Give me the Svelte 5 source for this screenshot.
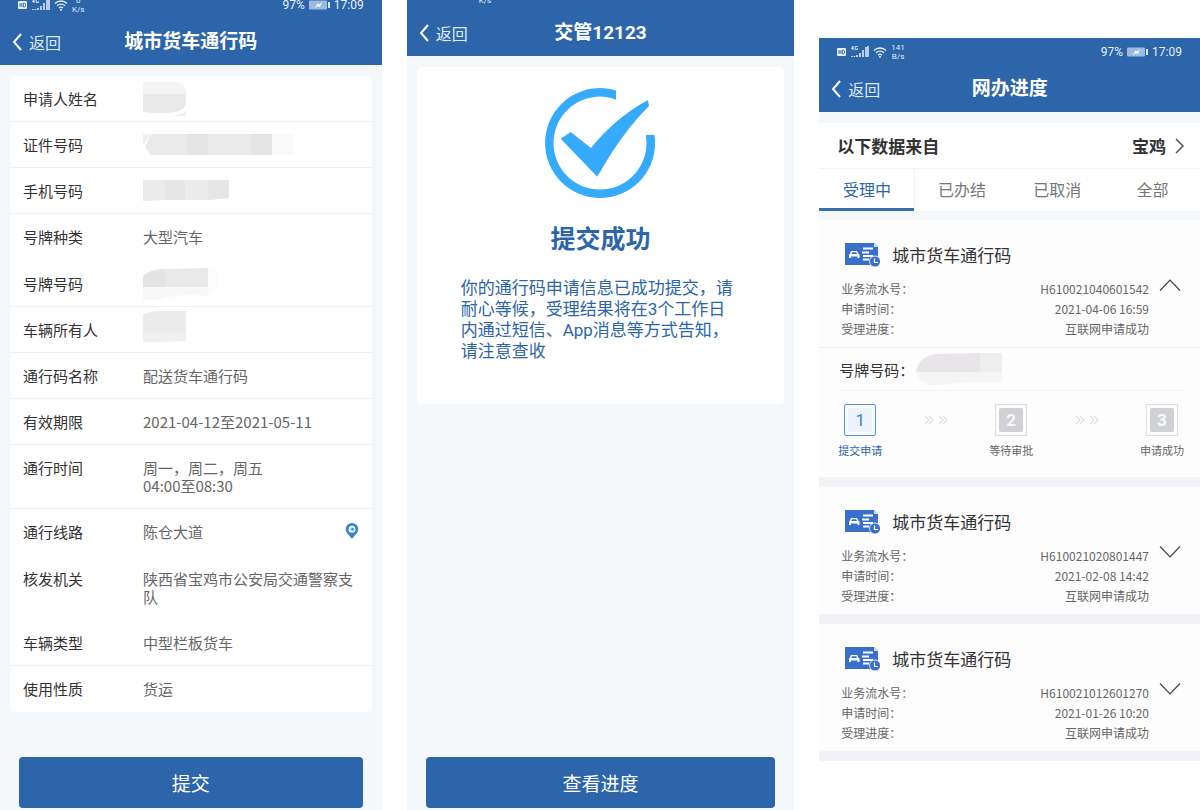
<script>
  // line = row has a visible rule under it, mask = value is blanked out
  const fields = [
    { label: '申请人姓名', mask: 'name', line: true },
    { label: '证件号码', mask: 'id', line: true },
    { label: '手机号码', mask: 'mobile', line: true },
    { label: '号牌种类', value: '大型汽车' },
    { label: '号牌号码', mask: 'plate', line: true },
    { label: '车辆所有人', mask: 'owner', line: true },
    { label: '通行码名称', value: '配送货车通行码', line: true },
    { label: '有效期限', value: '2021-04-12至2021-05-11', line: true },
    { label: '通行时间', value: '周一，周二，周五\n04:00至08:30', line: true },
    { label: '通行线路', value: '陈仓大道', pin: true },
    { label: '核发机关', value: '陕西省宝鸡市公安局交通警察支队' },
    { label: '车辆类型', value: '中型栏板货车', line: true },
    { label: '使用性质', value: '货运' }
  ]

  const tabs = ['受理中', '已办结', '已取消', '全部']
  let activeTab = $state(0)

  const steps = ['提交申请', '等待审批', '申请成功']

  let items = $state([
    { no: 'H610021040601542', time: '2021-04-06 16:59', open: true },
    { no: 'H610021020801447', time: '2021-02-08 14:42', open: false },
    { no: 'H610021012601270', time: '2021-01-26 10:20', open: false }
  ])
</script>

{#snippet topbar(title, speed, unit, cut)}
  <header class="topbar {cut}">
    <div class="status">
      <svg width="10" height="10" viewBox="0 0 10 10">
        <rect x="0" y="1" width="9" height="8" rx="1" fill="#e6eef8" />
        <path d="M2 3v4M4 3v4M2 5h2M5.500 3v4h1l1-1v-2l-1-1z" fill="none" stroke="#2c65a9" stroke-width=".8" />
      </svg>
      <svg width="18" height="14" viewBox="0 0 18 14">
        <path d="M2 1L.6 3.600h2M2 1v4M6.600 1.500H4.200v3h2.200V3.200" fill="none" stroke="#e6eef8" stroke-width=".9" />
        <path d="M1 12v-1M3.500 12v-1M6 12v-2M9 12V8M12 12V5M15 12V2M17 12V1" fill="none" stroke="#e6eef8" stroke-width="1.500" />
      </svg>
      <svg width="14" height="12" viewBox="0 0 14 12">
        <path d="M1 4.500a8.500 8.500 0 0 1 12 0M3 6.800a5.600 5.600 0 0 1 8 0M5 9a2.800 2.800 0 0 1 4 0" fill="none" stroke="#e6eef8" stroke-width="1.300" />
        <circle cx="7" cy="10.700" r="1" fill="#e6eef8" />
      </svg>
      <span class="speed">{speed}<br />{unit}</span>
      {#if cut !== 'cut-large'}
        <span class="percent">97%</span>
        <svg width="21" height="10" viewBox="0 0 21 10">
          <rect x="0" y="0.500" width="18" height="9" rx="1" fill="#9dbbe0" />
          <rect x="19" y="2" width="2" height="6" fill="#dbe7f5" />
          <path d="M6 8l3-5 1 2 3-3-2 5-2-1z" fill="#fff" />
        </svg>
        <span>17:09</span>
      {/if}
    </div>
    <div class="nav">
      <button class="back">
        <svg width="10" height="18" viewBox="0 0 10 18">
          <path d="M9 1L2 9l7 8" fill="none" stroke="#fff" stroke-width="2" />
        </svg>
        返回
      </button>
      <h1>{title}</h1>
    </div>
  </header>
{/snippet}

{#snippet mask(kind)}
  {#if kind === 'name'}
    <svg width="44" height="34" viewBox="0 0 44 34">
      <path d="M0 0h34q9 2 9 12H0z" fill="#f4f4f4" />
      <path d="M0 12h43v10q-3 8-15 8.500Q12 32 0 30z" fill="#e9e9e9" />
      <path d="M30 34q8-1 13-5v5z" fill="#f0f0f0" />
    </svg>
  {:else if kind === 'id'}
    <svg width="152" height="22" viewBox="0 0 152 22">
      <path d="M0 0h8L0 12z" fill="#f0f0f0" />
      <path d="M8 0h121v21H8L2 13z" fill="#eaeaea" />
      <path d="M44 0h21v21H44zM108 0h21v21h-21z" fill="#e4e4e4" />
      <path d="M129 0h22v21h-22z" fill="#f9f9f9" />
    </svg>
  {:else if kind === 'mobile'}
    <svg width="86" height="22" viewBox="0 0 86 22">
      <path d="M0 0h86v18l-20 2H22L0 21z" fill="#ebebeb" />
      <path d="M22 0h20v20H22zM65 0h21v18l-21 2z" fill="#e6e6e6" />
    </svg>
  {:else if kind === 'plate'}
    <svg width="76" height="32" viewBox="0 0 76 32">
      <path d="M65 0q12 4 10 14-2 10-10 14z" fill="#fcfcfc" />
      <path d="M0 19h65v10q-26-5-50 3H0z" fill="#f8f8f8" />
      <path d="M0 8Q8 1 22 1L65 0v19H0z" fill="#e9e9e9" />
      <path d="M0 8Q8 1 22 1v18H0z" fill="#e3e3e3" />
    </svg>
  {:else}
    <svg width="44" height="38" viewBox="0 0 44 38">
      <path d="M0 3L12 0h31v30L0 31z" fill="#ececec" />
      <path d="M0 21h43v9L0 31z" fill="#f0f0f0" />
    </svg>
  {/if}
{/snippet}

<main class="board">
  <section class="phone">
    {@render topbar('城市货车通行码', '0', 'K/s', 'cut-small')}
    <dl class="card fields">
      {#each fields as f}
        <div class="field" class:line={f.line}>
          <dt>{f.label}</dt>
          {#if f.mask}
            <dd class="masked">{@render mask(f.mask)}</dd>
          {:else}
            <dd>{f.value}</dd>
          {/if}
          {#if f.pin}
            <svg class="pin" width="14" height="16" viewBox="0 0 14 16">
              <path d="M7 0a6.300 6.300 0 0 1 6.300 6.300C13.300 10 9 13 7 16 5 13 .7 10 .7 6.300A6.300 6.300 0 0 1 7 0z" fill="#3b82cf" />
              <circle cx="7" cy="6.300" r="3.500" fill="#e9f6ff" />
              <path d="M5 6.300L8.500 4.500v3.600z" fill="#3b82cf" />
            </svg>
          {/if}
        </div>
      {/each}
    </dl>
    <button class="primary">提交</button>
  </section>

  <section class="phone">
    {@render topbar('交管12123', '0', 'K/s', 'cut-large')}
    <div class="card result">
      <svg width="110" height="110" viewBox="0 0 110 110" fill="#36abfd">
        <path d="M71 2.400A55 55 0 1 0 109.500 47H100.800A46.500 46.500 0 1 1 71 11.400z" />
        <path d="M15.700 50.700L25.700 44 46 60C58 45 78 25 103 12l1 6C85 37 70 58 52.300 88.700z" />
      </svg>
      <h2>提交成功</h2>
      <p>你的通行码申请信息已成功提交，请耐心等候，受理结果将在3个工作日内通过短信、App消息等方式告知，请注意查收</p>
    </div>
    <button class="primary">查看进度</button>
  </section>

  <section class="phone progress">
    {@render topbar('网办进度', '141', 'B/s', '')}
    <div class="source">
      <span>以下数据来自</span>
      <button>
        宝鸡
        <svg width="10" height="16" viewBox="0 0 10 16">
          <path d="M1 1l7 7-7 7" fill="none" stroke="#555" stroke-width="1.500" />
        </svg>
      </button>
    </div>
    <div class="tabs" role="tablist">
      {#each tabs as tab, i}
        <button role="tab" aria-selected={activeTab === i} class:active={activeTab === i} onclick={() => (activeTab = i)}>{tab}</button>
      {/each}
    </div>
    {#each items as item}
      <article>
        <div class="title">
          <svg width="35" height="25" viewBox="0 0 35 25">
            <path d="M0 0h29l4 4v18H0z" fill="#3a70cd" />
            <path d="M29 0v4h4z" fill="#cfdff6" />
            <path d="M6 8h6l1.500 3 1 .5V15h-2v-1.500H6V15H4v-3.500l.8-.5z" fill="#fff" />
            <path d="M7 9.200h4.300l.7 1.800H6.300z" fill="#3a70cd" />
            <path d="M18 5.500h10M17 9.500h7M18 13h10M18 16.500h6" stroke="#fff" stroke-width="2" />
            <circle cx="30" cy="18.500" r="5.500" fill="#3a70cd" stroke="#fff" stroke-width=".8" />
            <path d="M29.500 15.500v4h3.500" fill="none" stroke="#fff" stroke-width="1.200" />
          </svg>
          <h3>城市货车通行码</h3>
        </div>
        <div class="summary">
          <dl>
            <div><dt>业务流水号：</dt><dd>{item.no}</dd></div>
            <div><dt>申请时间：</dt><dd>{item.time}</dd></div>
            <div><dt>受理进度：</dt><dd>互联网申请成功</dd></div>
          </dl>
          <button class="toggle" aria-label="展开" aria-expanded={item.open} onclick={() => (item.open = !item.open)}>
            <svg width="22" height="12" viewBox="0 0 22 12">
              <path d={item.open ? 'M1 11.500L11 1l10 10.500' : 'M1 .5L11 11 21 .5'} fill="none" stroke="#444" stroke-width="1.200" />
            </svg>
          </button>
        </div>
        {#if item.open}
          <div class="plate">
            <span>号牌号码：</span>
            <svg width="86" height="33" viewBox="0 0 86 33">
              <path d="M0 19h86v10q-50 0-68 4Q3 31 0 19z" fill="#f6f5f6" />
              <path d="M0 19Q3 3 20 1l44-1v19z" fill="#e7e5e7" />
              <path d="M64 0h22v19H64z" fill="#efeeef" />
            </svg>
          </div>
          <ol class="steps">
            {#each steps as step, i}
              {#if i > 0}
                <li class="arrows" aria-hidden="true">
                  <svg width="24" height="10" viewBox="0 0 24 10">
                    <path d="M1 1l4 4-4 4M5 1l4 4-4 4M15 1l4 4-4 4M19 1l4 4-4 4" fill="none" stroke="#dcdfe6" stroke-width="1.200" />
                  </svg>
                </li>
              {/if}
              <li class="step" class:current={i === 0}>
                <span class="box"><b>{i + 1}</b></span>
                <span>{step}</span>
              </li>
            {/each}
          </ol>
        {/if}
      </article>
    {/each}
  </section>
</main>

<style>
  :global(body) {
    margin: 0;
    background: #fff;
  }
  .board {
    display: grid;
    grid-template-columns: 382fr 388fr 381fr;
    column-gap: 25px;
    min-height: 100vh;
    overflow: hidden;
    font-family: "Noto Sans CJK SC", "Noto Sans", sans-serif;
    color: #333;
  }
  button {
    font: inherit;
    color: inherit;
    border: 0;
    padding: 0;
    background: none;
    cursor: pointer;
  }
  svg {
    display: block;
    flex: none;
  }
  h1, h2, h3, p, dl, dd, ol {
    margin: 0;
    padding: 0;
  }
  .phone {
    display: flex;
    flex-direction: column;
    min-width: 0;
    background: #f4f8fa;
  }

  /* header */
  .topbar {
    background: #2c65a9;
    color: #fff;
  }
  .cut-small {
    margin-top: -9px;
  }
  .cut-large {
    margin-top: -18px;
  }
  .cut-large .status svg {
    visibility: hidden;
  }
  .status {
    display: flex;
    align-items: center;
    gap: 4px;
    height: 28px;
    padding: 0 18px;
    font: 12px/10px Roboto, sans-serif;
    color: #e6eef8;
  }
  .speed {
    font-size: 8px;
    line-height: 9px;
    text-align: center;
  }
  .percent {
    margin-left: auto;
  }
  .nav {
    display: grid;
    grid-template-columns: 1fr auto 1fr;
    align-items: center;
    height: 46px;
    padding: 0 12px;
  }
  .back {
    display: flex;
    align-items: center;
    gap: 7px;
    font-size: 16px;
    line-height: 20px;
    color: #dfeaf7;
  }
  h1 {
    font: bold 19px/24px Roboto, "Noto Sans CJK SC", sans-serif;
  }

  .card {
    margin: 11px 10px 0;
    background: #fff;
    border-radius: 5px;
  }
  .primary {
    margin: auto 19px 2px;
    height: 51px;
    flex: none;
    border-radius: 4px;
    background: #2c65a9;
    color: #fff;
    font-size: 19px;
  }

  /* application details */
  .fields {
    flex: 1;
    display: flex;
    flex-direction: column;
    margin-bottom: 45px;
    font-size: 15px;
    line-height: 18px;
  }
  .field {
    flex: 1 0 auto;
    display: flex;
    padding: 14px 13px;
  }
  .field.line {
    box-shadow: inset 0 -1px #eff2f2;
  }
  .field dt {
    flex: 0 0 120px;
  }
  .field dd {
    flex: 1;
    white-space: pre-line;
    color: #666;
  }
  .field .masked {
    display: flex;
    align-items: center;
    height: 18px;
  }
  .pin {
    margin-left: -14px;
  }

  /* submit result */
  .result {
    display: flex;
    flex-direction: column;
    align-items: center;
    padding: 21px 44px 42px;
    color: #2c65a9;
  }
  .result h2 {
    margin: 22px 0 24px;
    font-size: 25px;
    line-height: 34px;
  }
  .result p {
    font: 17px/21px Roboto, "Noto Sans CJK SC", sans-serif;
  }

  /* progress */
  .progress {
    align-self: start;
    margin-top: 38px;
    background: #f4f1f6;
  }
  .source {
    display: flex;
    justify-content: space-between;
    align-items: center;
    height: 45px;
    padding: 0 15px 0 18px;
    border-top: 11px solid #f4f8fa;
    background: #fff;
    font-size: 17px;
    line-height: 24px;
    font-weight: bold;
  }
  .source button {
    display: flex;
    align-items: center;
    gap: 9px;
  }
  .tabs {
    display: grid;
    grid-template-columns: repeat(4, 1fr);
    height: 42px;
    background: #fff;
    border-top: 1px solid #f2f3f5;
    border-bottom: 9px solid #f4f8fa;
  }
  .tabs button {
    border-bottom: 3px solid transparent;
    font-size: 16px;
    color: #777;
  }
  .tabs button.active {
    border-color: #3a6fb0;
    color: #2c65a9;
    box-shadow: 1px 0 #f0f1f4;
  }
  article {
    margin-bottom: 10px;
    background: #fdfdfe;
  }
  .title {
    display: flex;
    align-items: center;
    gap: 12px;
    height: 26px;
    padding: 22px 26px 11px;
  }
  h3 {
    font-size: 17px;
    line-height: 24px;
    font-weight: normal;
  }
  .summary {
    display: flex;
    align-items: flex-start;
    gap: 10px;
    padding: 0 19px 8px 22px;
  }
  .summary dl {
    flex: 1;
    font-size: 12px;
    line-height: 20px;
    color: #666;
  }
  .summary dl div {
    display: flex;
    justify-content: space-between;
  }
  .plate {
    display: flex;
    align-items: center;
    gap: 2px;
    height: 42px;
    padding: 0 20px;
    border-top: 1px solid #f0f0f3;
    font-size: 15px;
  }
  .steps {
    display: flex;
    justify-content: space-between;
    margin: 0 16px 0 19px;
    padding: 13px 0 19px;
    border-top: 1px solid #f3f3f6;
    list-style: none;
  }
  .step {
    display: flex;
    flex-direction: column;
    align-items: center;
    gap: 6px;
    font-size: 11px;
    line-height: 16px;
    color: #666;
  }
  .arrows {
    padding-top: 11px;
  }
  .box {
    display: flex;
    padding: 3px;
    border: 1px solid #dcdde0;
  }
  .box b {
    width: 24px;
    height: 24px;
    border-radius: 2px;
    background: #d0d1d5;
    color: #f8f8fa;
    font: bold 17px/24px Roboto, sans-serif;
    text-align: center;
  }
  .current {
    color: #2c65a9;
  }
  .current .box {
    border-color: #4f94d6;
    border-radius: 2px;
  }
  .current .box b {
    background: #edf3fd;
    color: #3f86cc;
    font-weight: normal;
  }
</style>
